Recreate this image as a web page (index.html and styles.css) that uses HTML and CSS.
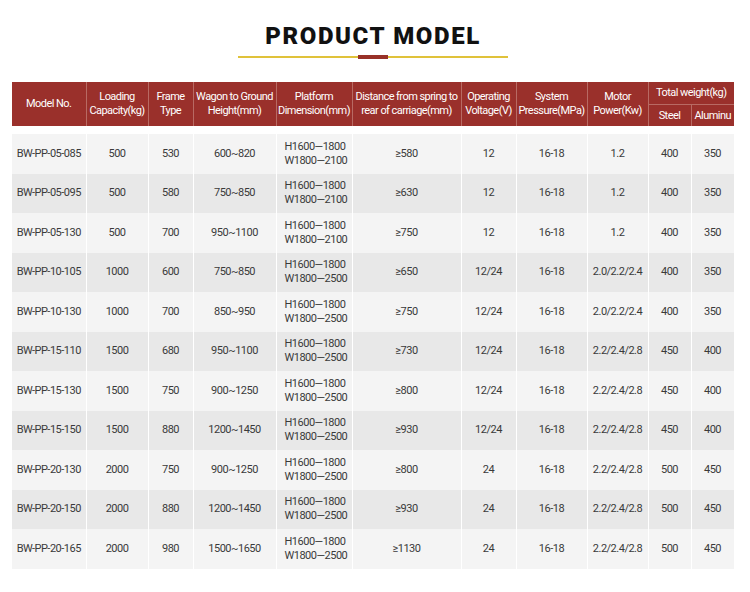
FILE: index.html
```html
<!DOCTYPE html>
<html>
<head>
<meta charset="utf-8">
<link rel="stylesheet" href="styles.css">
</head>
<body>
<div class="title-wrap">
  <h1 class="title">PRODUCT MODEL</h1>
  <div class="rule"><span class="rule-mark"></span></div>
</div>
<table class="spec">
  <colgroup>
    <col style="width:74px"><col style="width:62px"><col style="width:45px"><col style="width:83px"><col style="width:76px"><col style="width:109px"><col style="width:55px"><col style="width:71px"><col style="width:61px"><col style="width:43px"><col style="width:43px">
  </colgroup>
  <thead>
    <tr>
      <th rowspan="2">Model No.</th>
      <th rowspan="2">Loading<br>Capacity(kg)</th>
      <th rowspan="2">Frame<br>Type</th>
      <th rowspan="2">Wagon to Ground<br>Height(mm)</th>
      <th rowspan="2">Platform<br>Dimension(mm)</th>
      <th rowspan="2">Distance from spring to<br>rear of carriage(mm)</th>
      <th rowspan="2">Operating<br>Voltage(V)</th>
      <th rowspan="2">System<br>Pressure(MPa)</th>
      <th rowspan="2">Motor<br>Power(Kw)</th>
      <th colspan="2" class="top">Total weight(kg)</th>
    </tr>
    <tr>
      <th class="sub">Steel</th>
      <th class="sub">Aluminu</th>
    </tr>
  </thead>
  <tbody>
    <tr><td>BW-PP-05-085</td><td>500</td><td>530</td><td>600~820</td><td class="dim">H1600—1800<br>W1800—2100</td><td>≥580</td><td>12</td><td>16-18</td><td>1.2</td><td>400</td><td>350</td></tr>
    <tr><td>BW-PP-05-095</td><td>500</td><td>580</td><td>750~850</td><td class="dim">H1600—1800<br>W1800—2100</td><td>≥630</td><td>12</td><td>16-18</td><td>1.2</td><td>400</td><td>350</td></tr>
    <tr><td>BW-PP-05-130</td><td>500</td><td>700</td><td>950~1100</td><td class="dim">H1600—1800<br>W1800—2100</td><td>≥750</td><td>12</td><td>16-18</td><td>1.2</td><td>400</td><td>350</td></tr>
    <tr><td>BW-PP-10-105</td><td>1000</td><td>600</td><td>750~850</td><td class="dim">H1600—1800<br>W1800—2500</td><td>≥650</td><td>12/24</td><td>16-18</td><td>2.0/2.2/2.4</td><td>400</td><td>350</td></tr>
    <tr><td>BW-PP-10-130</td><td>1000</td><td>700</td><td>850~950</td><td class="dim">H1600—1800<br>W1800—2500</td><td>≥750</td><td>12/24</td><td>16-18</td><td>2.0/2.2/2.4</td><td>400</td><td>350</td></tr>
    <tr><td>BW-PP-15-110</td><td>1500</td><td>680</td><td>950~1100</td><td class="dim">H1600—1800<br>W1800—2500</td><td>≥730</td><td>12/24</td><td>16-18</td><td>2.2/2.4/2.8</td><td>450</td><td>400</td></tr>
    <tr><td>BW-PP-15-130</td><td>1500</td><td>750</td><td>900~1250</td><td class="dim">H1600—1800<br>W1800—2500</td><td>≥800</td><td>12/24</td><td>16-18</td><td>2.2/2.4/2.8</td><td>450</td><td>400</td></tr>
    <tr><td>BW-PP-15-150</td><td>1500</td><td>880</td><td>1200~1450</td><td class="dim">H1600—1800<br>W1800—2500</td><td>≥930</td><td>12/24</td><td>16-18</td><td>2.2/2.4/2.8</td><td>450</td><td>400</td></tr>
    <tr><td>BW-PP-20-130</td><td>2000</td><td>750</td><td>900~1250</td><td class="dim">H1600—1800<br>W1800—2500</td><td>≥800</td><td>24</td><td>16-18</td><td>2.2/2.4/2.8</td><td>500</td><td>450</td></tr>
    <tr><td>BW-PP-20-150</td><td>2000</td><td>880</td><td>1200~1450</td><td class="dim">H1600—1800<br>W1800—2500</td><td>≥930</td><td>24</td><td>16-18</td><td>2.2/2.4/2.8</td><td>500</td><td>450</td></tr>
    <tr><td>BW-PP-20-165</td><td>2000</td><td>980</td><td>1500~1650</td><td class="dim">H1600—1800<br>W1800—2500</td><td>≥1130</td><td>24</td><td>16-18</td><td>2.2/2.4/2.8</td><td>500</td><td>450</td></tr>
  </tbody>
</table>
</body>
</html>
```
FILE: styles.css
```css
html, body {
  margin: 0;
  padding: 0;
  background: #ffffff;
}
body {
  font-family: Roboto, "Liberation Sans", sans-serif;
}
.title-wrap {
  display: flex;
  flex-direction: column;
  align-items: center;
  padding-top: 22px;
  height: 82px;
  box-sizing: border-box;
  padding-right: 4px;
}
.title {
  margin: 0;
  font-family: Roboto, "Liberation Sans", sans-serif;
  font-weight: 900;
  font-size: 24px;
  line-height: 28px;
  color: #111111;
  letter-spacing: 1.6px;
}
.rule {
  margin-top: 6px;
  width: 270px;
  height: 2px;
  background: #e0c23a;
  position: relative;
}
.rule-mark {
  position: absolute;
  left: 120px;
  top: -1px;
  width: 30px;
  height: 4px;
  background: #983128;
}
.spec {
  margin-left: 12px;
  width: 722px;
  table-layout: fixed;
  border-collapse: collapse;
}
.spec th {
  background: #9a302b;
  color: #ffffff;
  font-weight: normal;
  font-size: 11px;
  line-height: 14px;
  letter-spacing: -0.55px;
  text-align: center;
  vertical-align: middle;
  border: 1px solid #b86a63;
  padding: 0;
  white-space: nowrap;
}
.spec thead tr:first-child th {
  border-top: none;
  height: 22px;
}
.spec th.sub {
  height: 21px;
}
.spec thead tr:last-child th,
.spec th[rowspan] {
  border-bottom: 8px solid #ffffff;
}
.spec th:first-child {
  border-left: none;
}
.spec th:last-child {
  border-right: none;
}
.spec td {
  font-size: 11px;
  line-height: 14px;
  letter-spacing: -0.5px;
  color: #3a3a3a;
  text-align: center;
  vertical-align: middle;
  height: 39.5px;
  padding: 0;
  border-left: 1px solid #ffffff;
  border-right: 1px solid #ffffff;
  white-space: nowrap;
}
.spec td:first-child {
  border-left: none;
}
.spec tbody tr:nth-child(odd) td {
  background: #f4f4f4;
}
.spec tbody tr:nth-child(even) td {
  background: #e8e8e8;
}
.spec td.dim {
  text-align: left;
  padding-left: 8px;
}
```
